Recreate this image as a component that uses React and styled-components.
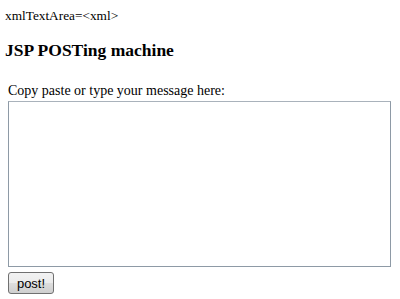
import React from 'react';
import styled, { createGlobalStyle } from 'styled-components';

const GlobalStyle = createGlobalStyle`
  body {
    margin: 8px 5px;
    font-family: 'Liberation Serif', 'Times New Roman', serif;
    color: #000;
    background: #fff;
  }
`;

const Line = styled.div`
  font-size: 13.3px;
  line-height: 15px;
`;

const Heading = styled.h3`
  font-size: 17.5px;
  line-height: 20px;
  font-weight: bold;
  margin: 17px 0 23px;
`;

const Form = styled.form`
  display: flex;
  flex-direction: column;
  align-items: flex-start;
  padding-left: 3px;
`;

const Label = styled.label`
  font-size: 14px;
  line-height: 16px;
  margin-bottom: 2px;
`;

const MessageArea = styled.textarea`
  display: block;
  width: 383px;
  height: 166px;
  box-sizing: border-box;
  border: 1px solid #8e9aa6;
  border-top-color: #a9b2bb;
  margin: 0;
  padding: 2px;
  resize: none;
`;

const PostButton = styled.button`
  margin-top: 5px;
  width: 46px;
  height: 22px;
  padding: 0;
  border: 1px solid #707070;
  border-radius: 3px;
  background: linear-gradient(#f2f2f2, #ebebeb 50%, #dddddd 51%, #cfcfcf);
  font-family: 'Liberation Sans', Arial, sans-serif;
  font-size: 13px;
  color: #000;
`;

export default function App() {
  return (
    <>
      <GlobalStyle />
      <Line>{'xmlTextArea=<xml>'}</Line>
      <Heading>JSP POSTing machine</Heading>
      <Form onSubmit={(e) => e.preventDefault()}>
        <Label htmlFor="msg">Copy paste or type your message here:</Label>
        <MessageArea id="msg" />
        <PostButton type="submit">post!</PostButton>
      </Form>
    </>
  );
}
